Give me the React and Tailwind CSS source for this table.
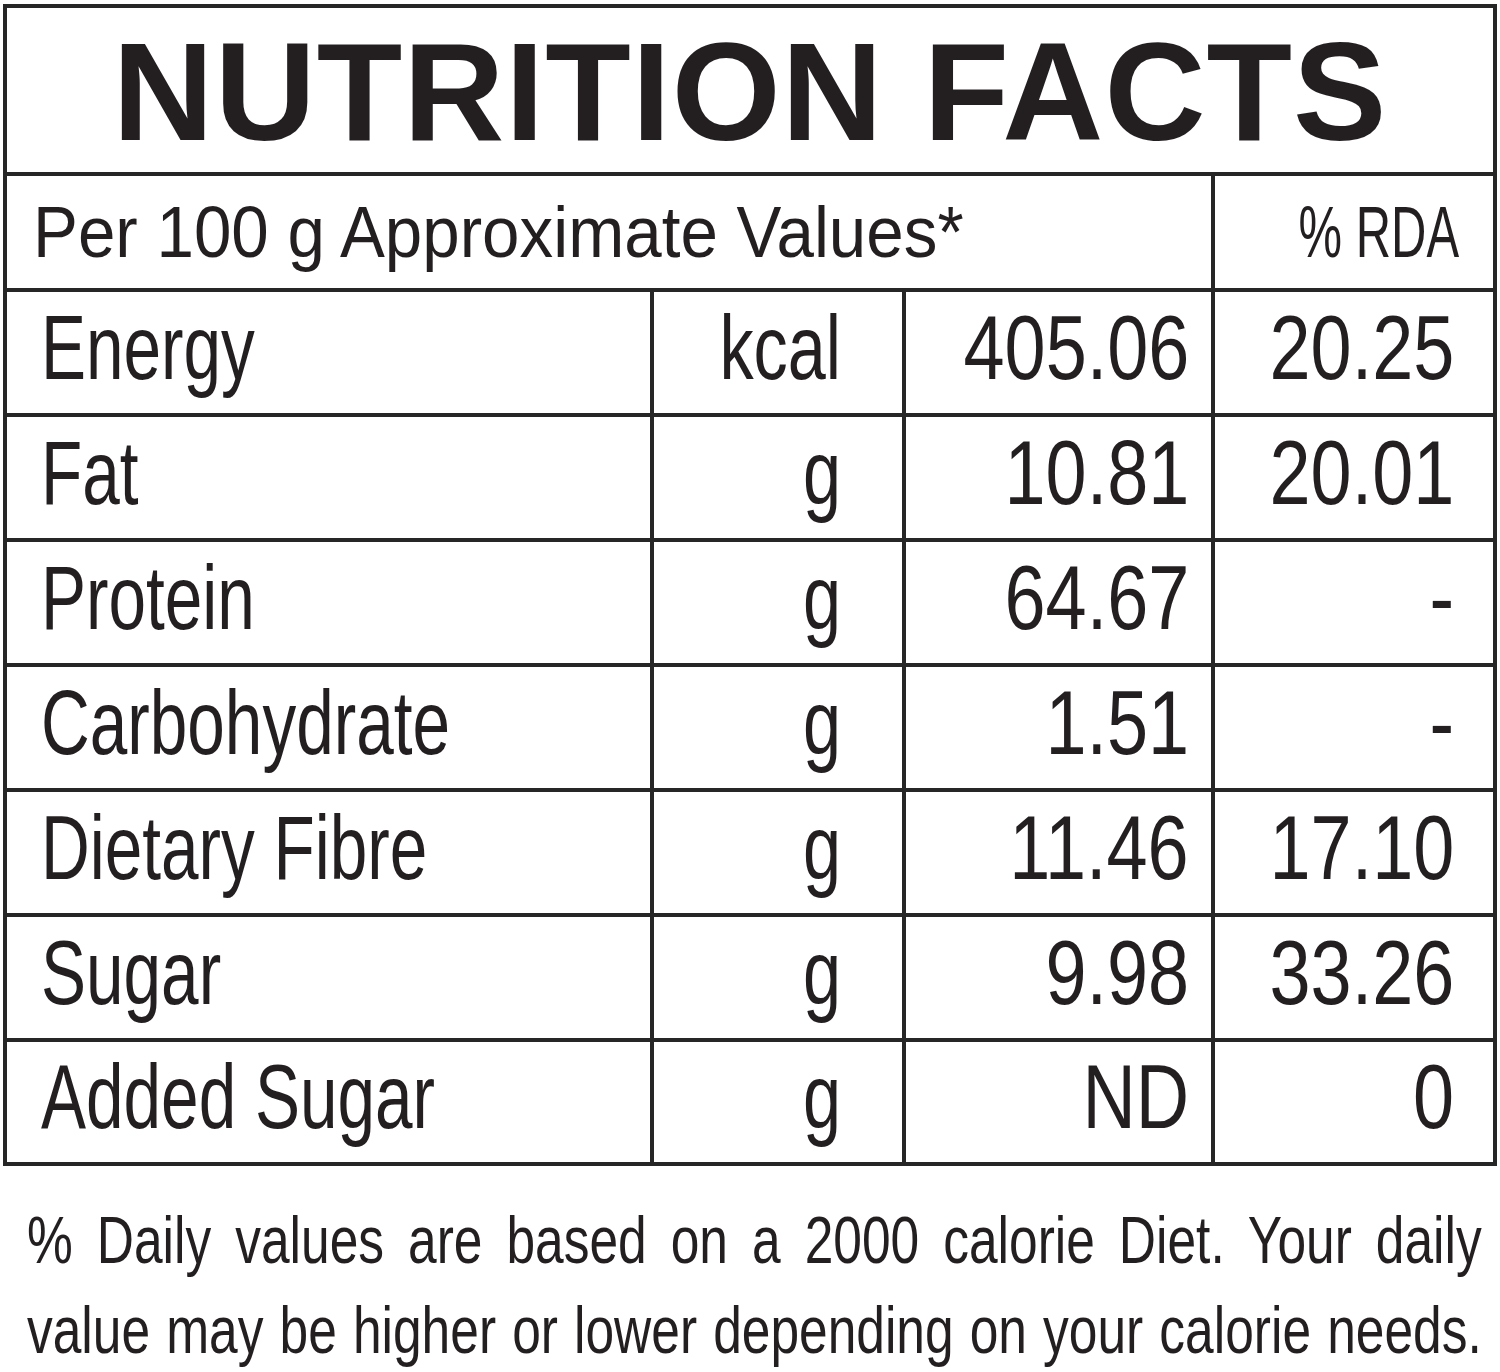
const rows = [
  { name: "Energy", unit: "kcal", value: "405.06", rda: "20.25" },
  { name: "Fat", unit: "g", value: "10.81", rda: "20.01" },
  { name: "Protein", unit: "g", value: "64.67", rda: "-" },
  { name: "Carbohydrate", unit: "g", value: "1.51", rda: "-" },
  { name: "Dietary Fibre", unit: "g", value: "11.46", rda: "17.10" },
  { name: "Sugar", unit: "g", value: "9.98", rda: "33.26" },
  { name: "Added Sugar", unit: "g", value: "ND", rda: "0" },
];

const sans = "font-['Liberation_Sans',Arial,sans-serif]";

export default function App() {
  return (
    <div className={`w-[1500px] min-h-[1372px] overflow-hidden bg-white text-[#231f20] ${sans}`}>
      <div className="pt-[4px] pl-[3px]">
        <div className="w-[1494px] border-4 border-[#262626]">
          <div className="h-[168px] flex items-center justify-center pt-[3px] border-b-4 border-[#262626]">
            <span className="font-bold text-[140px] leading-none tracking-[1px]">
              NUTRITION FACTS
            </span>
          </div>

          <div className="flex h-[116px] border-b-4 border-[#262626] text-[72px] leading-none">
            <div className="w-[1204px] flex items-center pl-[26px]">
              <span className="inline-block origin-left scale-x-[0.935] whitespace-nowrap">Per 100 g Approximate Values*</span>
            </div>
            <div className="flex-1 border-l-4 border-[#262626] flex items-center justify-end pr-[34px]">
              <span className="inline-block origin-right scale-x-[0.68]">% RDA</span>
            </div>
          </div>

          {rows.map((row, i) => (
            <div
              key={row.name}
              className={`flex ${i < rows.length - 1 ? "h-[125px] border-b-4 border-[#262626]" : "h-[120px]"} text-[90px] leading-none`}
            >
              <div className="w-[643px] flex items-center pl-[34px] pb-[10px]">
                <span className="inline-block origin-left scale-x-[0.75] whitespace-nowrap">{row.name}</span>
              </div>
              <div className="w-[252px] border-l-4 border-[#262626] flex items-center justify-end pr-[61px] pb-[10px]">
                <span className="inline-block origin-right scale-x-[0.76]">{row.unit}</span>
              </div>
              <div className="w-[309px] border-l-4 border-[#262626] flex items-center justify-end pr-[22px] pb-[10px]">
                <span className="inline-block origin-right scale-x-[0.82]">{row.value}</span>
              </div>
              <div className="flex-1 border-l-4 border-[#262626] flex items-center justify-end pr-[39px] pb-[10px]">
                <span className="inline-block origin-right scale-x-[0.82]">{row.rda}</span>
              </div>
            </div>
          ))}
        </div>
      </div>

      <div className="mt-[29px] ml-[27px] w-[1455px] text-[66px] leading-[90px]">
        <p className="w-[1865px] origin-left scale-x-[0.78] whitespace-nowrap text-justify [text-align-last:justify]">
          % Daily values are based on a 2000 calorie Diet. Your daily
        </p>
        <p className="w-[1865px] origin-left scale-x-[0.78] whitespace-nowrap text-justify [text-align-last:justify]">
          value may be higher or lower depending on your calorie needs.
        </p>
      </div>
    </div>
  );
}
